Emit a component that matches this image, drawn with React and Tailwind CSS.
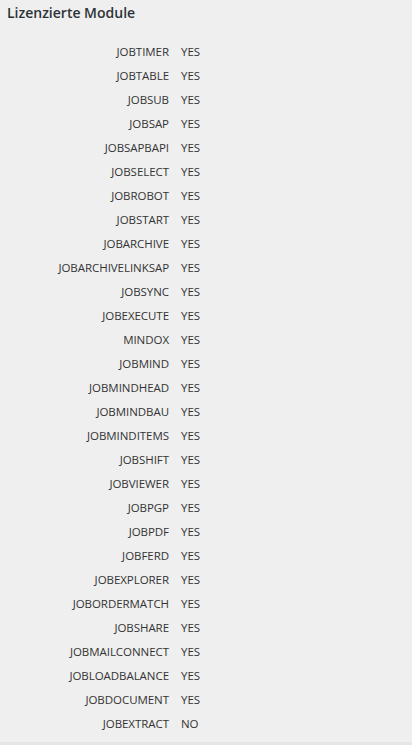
import React from "react";

const modules = [
  ["JOBTIMER", "YES"],
  ["JOBTABLE", "YES"],
  ["JOBSUB", "YES"],
  ["JOBSAP", "YES"],
  ["JOBSAPBAPI", "YES"],
  ["JOBSELECT", "YES"],
  ["JOBROBOT", "YES"],
  ["JOBSTART", "YES"],
  ["JOBARCHIVE", "YES"],
  ["JOBARCHIVELINKSAP", "YES"],
  ["JOBSYNC", "YES"],
  ["JOBEXECUTE", "YES"],
  ["MINDOX", "YES"],
  ["JOBMIND", "YES"],
  ["JOBMINDHEAD", "YES"],
  ["JOBMINDBAU", "YES"],
  ["JOBMINDITEMS", "YES"],
  ["JOBSHIFT", "YES"],
  ["JOBVIEWER", "YES"],
  ["JOBPGP", "YES"],
  ["JOBPDF", "YES"],
  ["JOBFERD", "YES"],
  ["JOBEXPLORER", "YES"],
  ["JOBORDERMATCH", "YES"],
  ["JOBSHARE", "YES"],
  ["JOBMAILCONNECT", "YES"],
  ["JOBLOADBALANCE", "YES"],
  ["JOBDOCUMENT", "YES"],
  ["JOBEXTRACT", "NO"],
];

const App = () => {
  return (
    <div className="min-h-[745px] bg-[#efefef] font-['Open_Sans',sans-serif] text-[#333]">
      <div className="h-[742px]">
        {/* Title */}
        <h2 className="px-[7px] pt-[3px] text-[14px] font-semibold text-[#2c3338] leading-[20px]">
          Lizenzierte Module
        </h2>

        {/* Module list */}
        <div className="mt-[17px] flex flex-col">
          {modules.map(([name, value]) => (
            <div key={name} className="flex h-[24px] items-center text-[11.5px] tracking-[-0.05px]">
              <span className="w-[169px] text-right">{name}</span>
              <span className="ml-[12px]">{value}</span>
            </div>
          ))}
        </div>
      </div>
      <div className="h-[3px] bg-[#e5e5e5]" />
    </div>
  );
};

export default App;
